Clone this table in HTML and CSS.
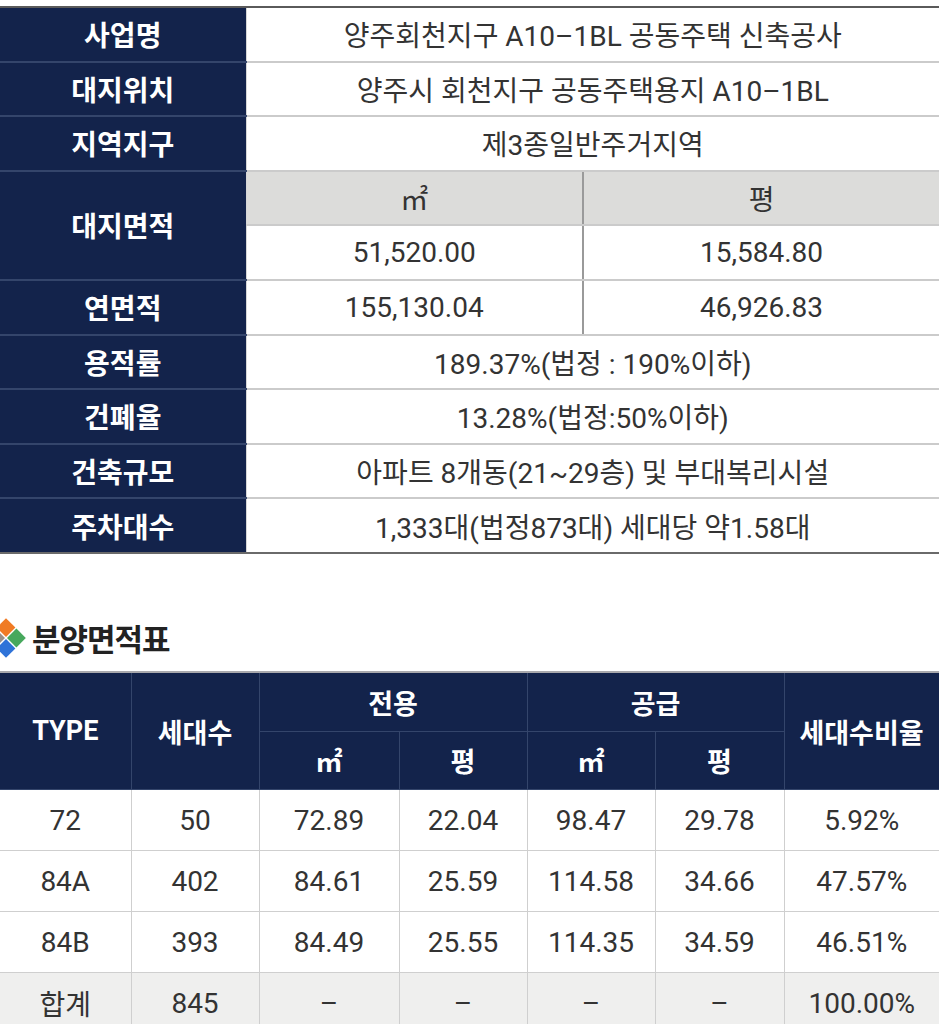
FILE: index.html
```html
<!DOCTYPE html>
<html lang="ko">
<head>
<meta charset="utf-8">
<title>양주회천지구 A10-1BL</title>
<link rel="stylesheet" href="styles.css">
</head>
<body>
<table class="info">
  <colgroup><col class="c-label"><col class="c-v1"><col class="c-v2"></colgroup>
  <tbody>
    <tr><th>사업명</th><td colspan="2">양주회천지구 A10–1BL 공동주택 신축공사</td></tr>
    <tr><th>대지위치</th><td colspan="2">양주시 회천지구 공동주택용지 A10–1BL</td></tr>
    <tr><th>지역지구</th><td colspan="2">제3종일반주거지역</td></tr>
    <tr><th rowspan="2">대지면적</th><td class="sub">㎡</td><td class="sub">평</td></tr>
    <tr><td>51,520.00</td><td>15,584.80</td></tr>
    <tr><th>연면적</th><td>155,130.04</td><td>46,926.83</td></tr>
    <tr><th>용적률</th><td colspan="2">189.37%(법정 : 190%이하)</td></tr>
    <tr><th>건폐율</th><td colspan="2">13.28%(법정:50%이하)</td></tr>
    <tr><th>건축규모</th><td colspan="2">아파트 8개동(21~29층) 및 부대복리시설</td></tr>
    <tr class="last"><th>주차대수</th><td colspan="2">1,333대(법정873대) 세대당 약1.58대</td></tr>
  </tbody>
</table>

<div class="section-title">
  <svg class="title-icon" width="42" height="42" viewBox="0 0 42 42" aria-hidden="true">
    <g transform="rotate(45 21 21)">
      <rect x="7" y="7" width="13.3" height="13.3" fill="#f07b24"/>
      <rect x="21.7" y="7" width="13.3" height="13.3" fill="#47a85d"/>
      <rect x="21.7" y="21.7" width="13.3" height="13.3" fill="#2f73d8"/>
      <rect x="7" y="21.7" width="13.3" height="13.3" fill="#9b9189"/>
    </g>
  </svg>
  <h2>분양면적표</h2>
</div>

<table class="area">
  <colgroup>
    <col style="width:131px"><col style="width:128px"><col style="width:140px"><col style="width:128px">
    <col style="width:128px"><col style="width:129px"><col style="width:155px">
  </colgroup>
  <thead>
    <tr class="h1">
      <th rowspan="2">TYPE</th>
      <th rowspan="2">세대수</th>
      <th colspan="2">전용</th>
      <th colspan="2">공급</th>
      <th rowspan="2">세대수비율</th>
    </tr>
    <tr class="h2">
      <th>㎡</th><th>평</th><th>㎡</th><th>평</th>
    </tr>
  </thead>
  <tbody>
    <tr><td>72</td><td>50</td><td>72.89</td><td>22.04</td><td>98.47</td><td>29.78</td><td>5.92%</td></tr>
    <tr><td>84A</td><td>402</td><td>84.61</td><td>25.59</td><td>114.58</td><td>34.66</td><td>47.57%</td></tr>
    <tr><td>84B</td><td>393</td><td>84.49</td><td>25.55</td><td>114.35</td><td>34.59</td><td>46.51%</td></tr>
    <tr class="total"><td>합계</td><td>845</td><td>–</td><td>–</td><td>–</td><td>–</td><td>100.00%</td></tr>
  </tbody>
</table>
</body>
</html>
```

FILE: styles.css
```css
html, body {
  margin: 0;
  padding: 0;
  background: #ffffff;
  overflow: hidden;
}

body {
  font-family: Roboto, "Noto Sans CJK KR", sans-serif;
  color: #333333;
}

table {
  border-collapse: collapse;
  table-layout: fixed;
  width: 939px;
}

/* ---------- project info table ---------- */
.info {
  margin-top: 6px;
  border-top: 2px solid #5a5a5a;
  border-bottom: 2px solid #6a6a6a;
}

.info .c-label { width: 246px; }
.info .c-v1 { width: 337px; }
.info .c-v2 { width: 356px; }

.info tr { height: 54.6px; }

.info th {
  background: #13234b;
  color: #ffffff;
  font-family: "Noto Sans CJK KR", sans-serif;
  font-weight: 700;
  font-size: 28px;
  border-bottom: 2px solid #34456b;
  padding: 0;
  text-align: center;
  vertical-align: middle;
}

.info td {
  font-size: 28px;
  text-align: center;
  vertical-align: middle;
  padding: 0;
  border-bottom: 2px solid #cbcbcb;
  border-left: 1px solid #d6d6d6;
}

.info td.sub {
  background: #dcdcda;
  color: #333333;
}

.info td.sub + td.sub {
  border-left: 2px solid #9a9a9a;
}

.info tr:nth-child(5) td:nth-child(2),
.info tr:nth-child(6) td:nth-child(3) {
  border-left: 2px solid #9a9a9a;
}

.info tr.last th,
.info tr.last td {
  border-bottom: none;
}

/* ---------- section title ---------- */
.section-title {
  display: flex;
  align-items: center;
  height: 42px;
  margin-top: 63px;
  margin-bottom: 12px;
}

.title-icon {
  flex: none;
  margin-left: -15px;
  margin-right: 5px;
}

.section-title h2 {
  margin: 0;
  font-family: "Noto Sans CJK KR", sans-serif;
  font-size: 31px;
  font-weight: 700;
  color: #222222;
  letter-spacing: -1px;
}

/* ---------- area table ---------- */
.area {
  border-top: 2px solid #a9a9ad;
}

.area th {
  background: #13234b;
  color: #ffffff;
  font-family: Roboto, "Noto Sans CJK KR", sans-serif;
  font-weight: 700;
  font-size: 27px;
  padding: 0;
  text-align: center;
  vertical-align: middle;
  border: 1px solid #34456b;
}

.area tr.h1 { height: 60px; }
.area tr.h2 { height: 58px; }

.area td {
  font-size: 28px;
  text-align: center;
  vertical-align: middle;
  padding: 0;
  height: 60px;
  border-left: 1px solid #cfcfcf;
  border-bottom: 1px solid #cfcfcf;
}

.area td:first-child,
.area th:first-child {
  border-left: none;
}

.area tr.total td {
  background: #efefee;
}
```
